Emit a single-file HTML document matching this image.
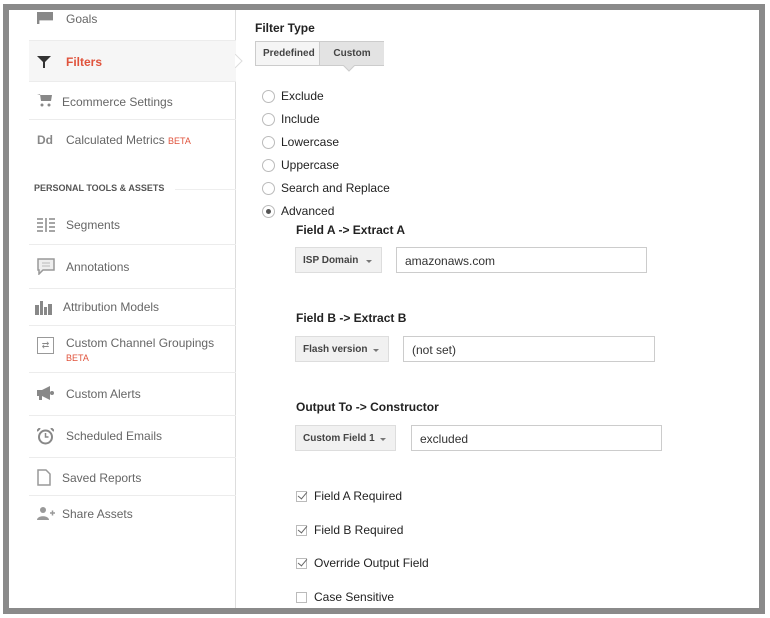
<!DOCTYPE html>
<html><head><meta charset="utf-8"><style>
*{margin:0;padding:0;box-sizing:border-box}
body{width:770px;height:618px;background:#fff;position:relative;overflow:hidden;font-family:"Liberation Sans",Arial,sans-serif;color:#333}
.frame{position:absolute;left:3px;top:4px;width:762px;height:610px;border:6px solid #8a8a8a;border-bottom-width:6px;background:#fff;overflow:hidden}
.a{position:absolute}
.side{position:absolute;left:0;top:0;width:227px;height:600px;border-right:1px solid #ddd}
.it{position:absolute;left:20px;width:207px;border-bottom:1px solid #ececec;font-size:12px;color:#666}
.it .t{position:absolute;left:37px}
.ic{position:absolute;left:8px;color:#888}
.beta{color:#e0533c;font-size:9px}
.lbl{font-size:12px;font-weight:bold;color:#222}
.rad{position:absolute;width:13px;height:13px;border:1px solid #bbb;border-radius:50%;background:#fff}
.rt{position:absolute;font-size:12px;color:#222}
.sel{position:absolute;height:26px;background:#f1f1f1;border:1px solid #ddd;font-size:10px;font-weight:bold;color:#444;padding:7px 7px}
.sel:after{content:"";position:absolute;right:9px;top:12px;border:3px solid transparent;border-top:3px solid #777}
.inp{position:absolute;height:26px;border:1px solid #ccc;font-size:12px;color:#333;padding:6px 8px}
.cb{position:absolute;width:11px;height:11px;border:1px solid #bbb;background:#fff}
.ck:after{content:"";position:absolute;left:3px;top:-2px;width:4px;height:8px;border-right:1.5px solid #666;border-bottom:1.5px solid #666;transform:rotate(40deg)}
</style></head><body>
<div class="frame">
<div class="side">
  <div class="it" style="top:-10px;height:40px;border:none"><span class="ic" style="top:12px;width:16px;height:12px;background:#888;clip-path:polygon(0 0,100% 0,100% 70%,15% 70%,15% 100%,0 100%)"></span><span class="t" style="top:12px">Goals</span></div>
  <div class="it" style="top:30px;height:42px;background:#f6f6f6;border-top:1px solid #ececec"><svg class="ic" style="top:14px" width="14" height="14" viewBox="0 0 14 14"><path d="M0 1h14L8 7v6H6V7z" fill="#333"/></svg><span class="t" style="top:14px;color:#e0533c;font-weight:bold">Filters</span></div>
  <svg class="a" style="left:226px;top:44px" width="8" height="14"><path d="M0 0L7 7L0 14" fill="#fff" stroke="#ddd"/></svg>
  <div class="it" style="top:72px;height:38px"><svg class="ic" style="top:11px" width="16" height="14" viewBox="0 0 16 14"><path d="M0 1h3l1 7h10l1-6H4" fill="#888"/><circle cx="5" cy="12" r="1.5" fill="#888"/><circle cx="12" cy="12" r="1.5" fill="#888"/></svg><span class="t" style="top:13px;left:33px">Ecommerce Settings</span></div>
  <div class="it" style="top:110px;height:40px;border:none"><span class="ic" style="top:13px;font-weight:bold;font-size:12px">Dd</span><span class="t" style="top:13px">Calculated Metrics <span class="beta">BETA</span></span></div>
  <div class="a" style="left:25px;top:173px;font-size:9px;font-weight:bold;color:#555">PERSONAL TOOLS &amp; ASSETS</div>
  <div class="a" style="left:166px;top:179px;width:61px;border-top:1px solid #eee"></div>
  <div class="it" style="top:195px;height:40px"><svg class="ic" style="top:13px" width="18" height="14"><path d="M0 1h6M0 5h6M0 9h6M0 13h6M12 1h6M12 5h6M12 9h6M12 13h6M9 0v14" stroke="#888" stroke-width="1.5"/></svg><span class="t" style="top:13px">Segments</span></div>
  <div class="it" style="top:235px;height:44px"><svg class="ic" style="top:13px" width="18" height="17"><path d="M1 1h16v11H6l-4 4v-4H1z" fill="#eee" stroke="#999" stroke-width="1.5"/><path d="M5 5h8M5 8h8" stroke="#bbb"/></svg><span class="t" style="top:15px">Annotations</span></div>
  <div class="it" style="top:279px;height:37px"><svg class="ic" style="top:12px;left:6px" width="18" height="14"><path d="M0 4h4v10H0zM5 0h3v14H5zM9 6h3v8H9zM13 3h4v11h-4z" fill="#888"/></svg><span class="t" style="top:11px;left:34px">Attribution Models</span></div>
  <div class="it" style="top:316px;height:47px"><span class="ic" style="top:11px;width:17px;height:17px;border:1px solid #999;font-size:9px;text-align:center;line-height:15px">⇄</span><span class="t" style="top:10px;line-height:14px">Custom Channel Groupings<br><span class="beta">BETA</span></span></div>
  <div class="it" style="top:363px;height:43px"><svg class="ic" style="top:13px" width="18" height="14"><path d="M0 4h5l8-4v14l-8-4H0z" fill="#888"/><path d="M2 10h3v4H2z" fill="#888"/><circle cx="15" cy="7" r="2" fill="#888"/></svg><span class="t" style="top:14px">Custom Alerts</span></div>
  <div class="it" style="top:406px;height:42px"><svg class="ic" style="top:12px" width="17" height="17"><circle cx="8.5" cy="9" r="6.5" fill="none" stroke="#888" stroke-width="2"/><path d="M8.5 5v4h3" stroke="#888" stroke-width="1.5" fill="none"/><path d="M0 3l3-3M17 3l-3-3" stroke="#888" stroke-width="2"/></svg><span class="t" style="top:13px">Scheduled Emails</span></div>
  <div class="it" style="top:448px;height:38px"><svg class="ic" style="top:11px" width="14" height="17"><path d="M1 1h8l4 4v11H1z" fill="#fff" stroke="#999" stroke-width="1.5"/></svg><span class="t" style="top:13px;left:33px">Saved Reports</span></div>
  <div class="it" style="top:486px;height:40px;border:none"><svg class="ic" style="top:11px" width="18" height="13"><circle cx="6" cy="3" r="3" fill="#999"/><path d="M0 13c0-5 12-5 12 0z" fill="#999"/><path d="M13 6h5M15.5 3.5v5" stroke="#999" stroke-width="1.5"/></svg><span class="t" style="top:11px;left:33px">Share Assets</span></div>
</div>
<div class="a lbl" style="left:246px;top:11px">Filter Type</div>
<div class="a" style="left:246px;top:31px;width:129px;height:25px;border:1px solid #ccc;background:#f5f5f5;font-size:10px;font-weight:bold;color:#444">
 <span class="a" style="left:7px;top:6px">Predefined</span>
 <span class="a" style="left:63px;top:-1px;width:65px;height:25px;background:#e3e3e3;border:1px solid #ccc;border-right:none;text-align:center;padding-top:6px">Custom</span>
</div>
<svg class="a" style="left:334px;top:55px" width="12" height="7"><path d="M0 0L6 6L12 0" fill="#e3e3e3" stroke="#ccc"/></svg>
<div class="rad" style="left:253px;top:80px"></div><div class="rt" style="left:272px;top:79px">Exclude</div>
<div class="rad" style="left:253px;top:103px"></div><div class="rt" style="left:272px;top:102px">Include</div>
<div class="rad" style="left:253px;top:126px"></div><div class="rt" style="left:272px;top:125px">Lowercase</div>
<div class="rad" style="left:253px;top:149px"></div><div class="rt" style="left:272px;top:148px">Uppercase</div>
<div class="rad" style="left:253px;top:172px"></div><div class="rt" style="left:272px;top:171px">Search and Replace</div>
<div class="rad" style="left:253px;top:195px"><span class="a" style="left:3px;top:3px;width:5px;height:5px;border-radius:50%;background:#555"></span></div><div class="rt" style="left:272px;top:194px">Advanced</div>
<div class="a lbl" style="left:287px;top:213px">Field A -&gt; Extract A</div>
<div class="sel" style="left:286px;top:237px;width:87px">ISP Domain</div>
<div class="inp" style="left:387px;top:237px;width:251px">amazonaws.com</div>
<div class="a lbl" style="left:287px;top:301px">Field B -&gt; Extract B</div>
<div class="sel" style="left:286px;top:326px;width:94px">Flash version</div>
<div class="inp" style="left:394px;top:326px;width:252px">(not set)</div>
<div class="a lbl" style="left:287px;top:390px">Output To -&gt; Constructor</div>
<div class="sel" style="left:286px;top:415px;width:101px">Custom Field 1</div>
<div class="inp" style="left:402px;top:415px;width:251px">excluded</div>
<div class="cb ck" style="left:287px;top:481px"></div><div class="rt" style="left:305px;top:479px">Field A Required</div>
<div class="cb ck" style="left:287px;top:515px"></div><div class="rt" style="left:305px;top:513px">Field B Required</div>
<div class="cb ck" style="left:287px;top:548px"></div><div class="rt" style="left:305px;top:546px">Override Output Field</div>
<div class="cb" style="left:287px;top:582px"></div><div class="rt" style="left:305px;top:580px">Case Sensitive</div>
</div>
</body></html>
